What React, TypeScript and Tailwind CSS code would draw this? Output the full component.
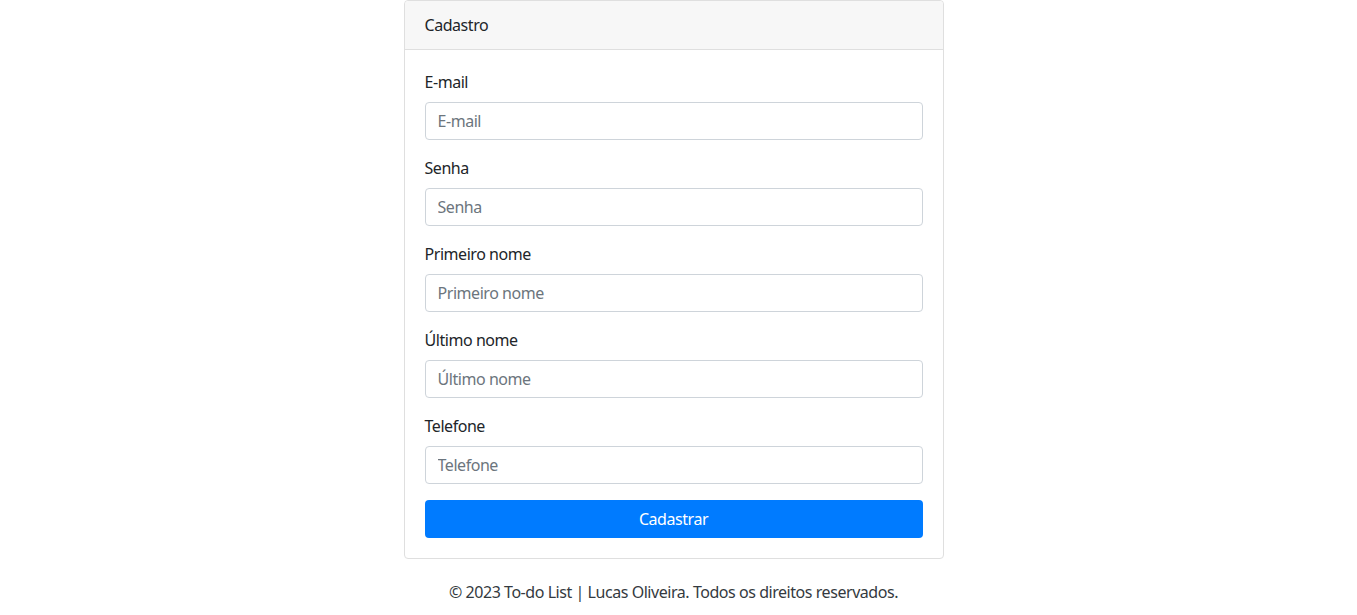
import React from "react";

const fields = ["E-mail", "Senha", "Primeiro nome", "Último nome", "Telefone"];

export default function App() {
    return (
        <div className="min-h-screen bg-white text-[#212529] text-base leading-6 tracking-[-0.45px]" style={{ fontFamily: '"Noto Sans", "Open Sans", sans-serif' }}>
            <div className="w-[1347px] flex flex-col items-center">
                {/* Card */}
                <div className="w-[540px] border border-[#dfdfdf] rounded">
                    <div className="px-5 py-3 bg-[#f7f7f7] border-b border-[#dfdfdf] rounded-t">Cadastro</div>
                    <form className="p-5" onSubmit={(e) => e.preventDefault()}>
                        {fields.map((f) => (
                            <div key={f} className="mb-4">
                                <label className="block mb-2">{f}</label>
                                <input
                                    type="text"
                                    placeholder={f}
                                    className="block w-full h-[38px] px-3 py-1.5 border border-[#ced4da] rounded text-[#495057] tracking-[-0.45px] placeholder:text-[#6c757d] outline-none"
                                />
                            </div>
                        ))}
                        <button type="submit" className="block w-full h-[38px] rounded bg-[#007bff] text-white tracking-[-0.45px]">
                            Cadastrar
                        </button>
                    </form>
                </div>

                {/* Footer */}
                <footer className="mt-[21px] text-center text-[#343a40]">
                    © 2023 To-do List | Lucas Oliveira. Todos os direitos reservados.
                </footer>
            </div>
        </div>
    );
}
